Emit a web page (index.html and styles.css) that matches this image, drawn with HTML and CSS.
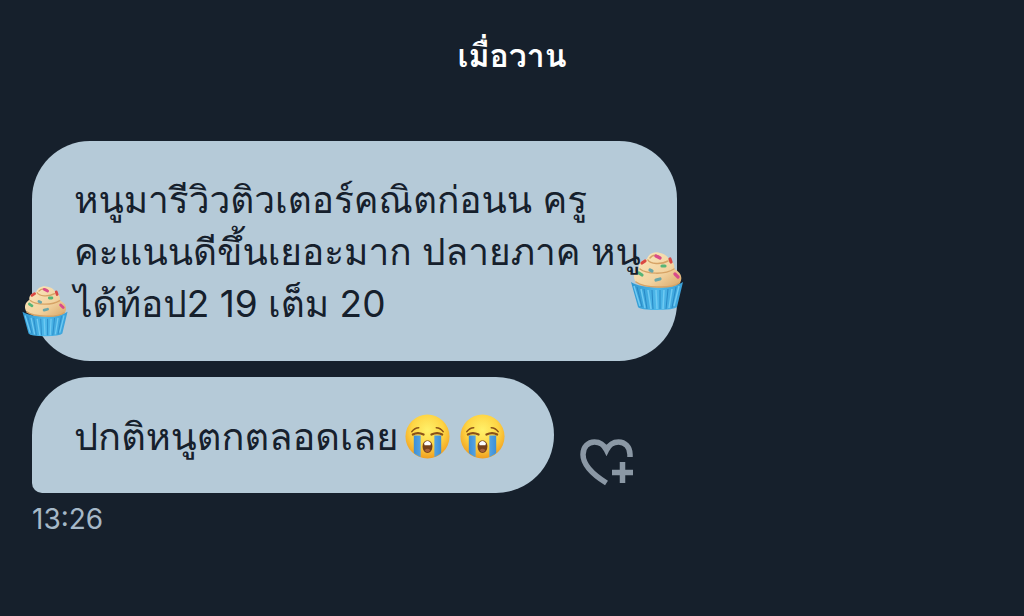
FILE: index.html
```
<!DOCTYPE html>
<html lang="th">
<head>
<meta charset="utf-8">
<meta name="viewport" content="width=device-width, initial-scale=1">
<title>เมื่อวาน</title>
<link rel="stylesheet" href="styles.css">
</head>
<body>
<svg class="defs" aria-hidden="true">
  <defs>
    <linearGradient id="cream" x1="0" y1="0" x2="1" y2="1">
      <stop offset="0" stop-color="#fbe8bf"/><stop offset=".6" stop-color="#f2d3a0"/><stop offset="1" stop-color="#d9a566"/>
    </linearGradient>
    <linearGradient id="wrap" x1="0" y1="0" x2="1" y2="0">
      <stop offset="0" stop-color="#2f97d0"/><stop offset=".5" stop-color="#4db8ea"/><stop offset="1" stop-color="#3aa0d8"/>
    </linearGradient>
    <radialGradient id="face" cx=".5" cy=".36" r=".66">
      <stop offset="0" stop-color="#fff16a"/><stop offset=".55" stop-color="#fed545"/><stop offset="1" stop-color="#f09a1c"/>
    </radialGradient>
    <linearGradient id="tear" x1="0" y1="0" x2="1" y2="0">
      <stop offset="0" stop-color="#3d8fd6"/><stop offset=".5" stop-color="#6bb7ee"/><stop offset="1" stop-color="#3d8fd6"/>
    </linearGradient>
    <clipPath id="face-clip"><circle cx="24" cy="24" r="22"/></clipPath>
    <symbol id="cupcake" viewBox="0 0 52 60">
      <path fill="url(#wrap)" d="M0 31C10 38 42 38 52 31L46 56Q43 59 26 59Q9 59 7 56Z"/>
      <path fill="none" stroke="#2989c6" stroke-width="1" d="M6 36L11 56M13 38L16 58M21 39L22 58M29 39V58M37 38L35 58M45 36L41 57"/>
      <path fill="none" stroke="#6fcaf3" stroke-width="1.5" d="M3 35L9 55M10 38L14 57M17 39L20 58M25 39L26 58M33 39L32 58M41 38L38 57M48 35L43 55"/>
      <path fill="url(#cream)" d="M4 30C1 23 5 19 8 17C7 12 11 9 16 8C17 3 24 0 29 2C35 3 38 7 38 9C43 11 44 15 43 18C50 21 52 27 49 32C42 38 12 38 4 30Z"/>
      <path fill="none" stroke="#d6a366" stroke-width="1.5" stroke-linecap="round" d="M17 9C19 13 30 14 37 10M9 18C15 23 34 24 43 18M5 31C13 37 41 38 48 32M19 7C22 3 29 4 29 7"/>
      <g fill="none" stroke-width="3.2" stroke-linecap="round">
        <path stroke="#d94b8b" d="M25 5L29 7M44 23L47 26"/>
        <path stroke="#d94843" d="M39 8L40 11M11 12L14 10"/>
        <path stroke="#57b576" d="M31 15L34 15M8 22L11 24"/>
        <path stroke="#69a7a9" d="M25 29L29 28M19 19L21 20"/>
      </g>
    </symbol>
    <symbol id="crying" viewBox="0 0 48 48">
      <circle cx="24" cy="24" r="22.5" fill="url(#face)"/>
      <g clip-path="url(#face-clip)">
        <path fill="url(#tear)" d="M10 23H17V48H10ZM31 23H38V48H31Z"/>
      </g>
      <g fill="none" stroke="#8a5118" stroke-linecap="round">
        <path stroke-width="1.6" d="M8 19Q11 15 15 15M33 15Q37 15 40 19"/>
        <path stroke-width="2.2" d="M9 22Q14 19 20 22M28 22Q34 19 39 22"/>
      </g>
      <path fill="#75401b" d="M19 34C19 26 29 26 29 34C29 43 19 43 19 34Z"/>
      <path fill="#fff" d="M20.500 31Q24 26 27.500 31L27 33H21Z"/>
      <path fill="#a8623a" d="M21 38Q24 35 27 38Q24 42 21 38Z"/>
    </symbol>
  </defs>
</svg>
<main class="chat">
  <h1 class="day">เมื่อวาน</h1>
  <section class="messages">
    <div class="bubble bubble-large">
      <svg class="sticker sticker-left" aria-hidden="true"><use href="#cupcake"/></svg>
      <svg class="sticker sticker-right" aria-hidden="true"><use href="#cupcake"/></svg>
      <p class="text">หนูมารีวิวติวเตอร์คณิตก่อนน ครู<br>คะแนนดีขึ้นเยอะมาก ปลายภาค หนู<br>ได้ท้อป2 19 เต็ม 20</p>
    </div>
    <div class="row">
      <div class="bubble bubble-last">
        <p class="text">ปกติหนูตกตลอดเลย</p>
        <span class="emojis">
          <svg class="emoji" role="img" aria-label="😭"><use href="#crying"/></svg>
          <svg class="emoji" role="img" aria-label="😭"><use href="#crying"/></svg>
        </span>
      </div>
      <button class="react" type="button" aria-label="เพิ่มความรู้สึก">
        <svg class="heart" viewBox="0 0 54 48" aria-hidden="true">
          <path fill="none" stroke="#8b98a5" stroke-width="5.500" d="M26.500 44C12 35 3 26 3 15.500C3 8 8 3 14.500 3C20 3 24 6 26.500 11C29 6 33 3 38.500 3C45 3 50 8 50 15.500V18"/>
          <path fill="none" stroke="#8b98a5" stroke-width="5.500" d="M42.500 23V44M32 33.500H53"/>
        </svg>
      </button>
    </div>
    <time class="time" datetime="13:26">13:26</time>
  </section>
</main>
</body>
</html>
```

FILE: styles.css
```
* { box-sizing: border-box; }
body {
  margin: 0;
  background: #16202c;
  color: #16202c;
  font-family: Inter, Loma, "Noto Sans", sans-serif;
}
.defs { position: absolute; width: 0; height: 0; }
.chat { padding: 32px; }
.day {
  margin: 0 0 61px;
  color: #fff;
  font-size: 32px;
  line-height: 48px;
  font-weight: 700;
  text-align: center;
}
.messages {
  display: flex;
  flex-direction: column;
  align-items: flex-start;
}
.bubble {
  position: relative;
  padding: 33px 36px 31px 42px;
  background: #b5cad8;
  border-radius: 58px;
}
.bubble-large { margin-bottom: 16px; }
.bubble-last {
  display: flex;
  align-items: center;
  gap: 5px;
  padding-right: 48px;
  border-bottom-left-radius: 10px;
}
.text {
  position: relative;
  margin: 0;
  font-size: 37px;
  line-height: 52px;
  white-space: nowrap;
}
.bubble-last .text { font-size: 38px; }
.sticker { position: absolute; }
.sticker-left { left: -10px; bottom: 24px; width: 46px; height: 52px; }
.sticker-right { right: -6px; bottom: 50px; width: 52px; height: 60px; }
.emojis { display: flex; gap: 8px; }
.emoji { width: 47px; height: 47px; }
.row { display: flex; align-items: flex-end; gap: 26px; }
.react {
  margin-bottom: 6px;
  padding: 0;
  border: 0;
  background: none;
  cursor: pointer;
}
.heart { display: block; width: 54px; height: 48px; }
.time {
  margin-top: 8px;
  color: #a6b9c8;
  font-size: 28px;
  line-height: 36px;
}
```
